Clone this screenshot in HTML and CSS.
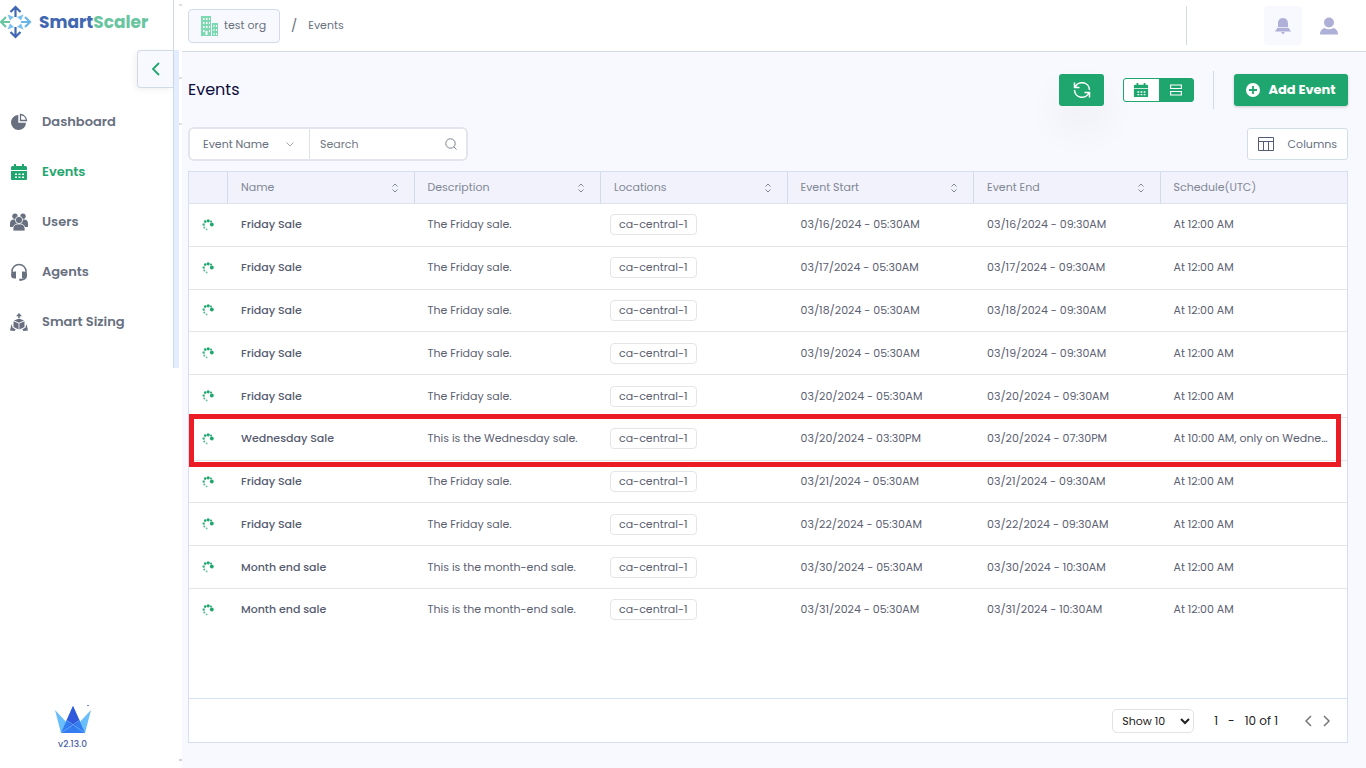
FILE: index.html
```html
<!DOCTYPE html>
<html lang="en">
<head>
    <meta charset="UTF-8">
    <meta name="viewport" content="width=device-width, initial-scale=1.0">
    <title>SmartScaler</title>
    <link rel="stylesheet" href="styles.css">
</head>
<body>

<svg class="sprite" aria-hidden="true">
    <symbol id="calendar" viewBox="0 0 18 18">
        <path fill="currentColor" d="M4 1h2v2h6V1h2v2h1.500A1.500 1.500 0 0 1 17 4.500V7H1V4.500A1.500 1.500 0 0 1 2.500 3H4zM1 8h16v8a1 1 0 0 1-1 1H2a1 1 0 0 1-1-1zM5 10.500v1.500h2v-1.500zm3.500 0v1.500h2v-1.500zm3.500 0v1.500h2v-1.500zM5 13.500v1.500h2v-1.500zm3.500 0v1.500h2v-1.500zm3.500 0v1.500h2v-1.500z" fill-rule="evenodd"/>
    </symbol>
    <symbol id="sort" viewBox="0 0 8 10">
        <path d="M1.500 3.500 4 1l2.500 2.500M1.500 6.500 4 9l2.500-2.500" fill="none" stroke="currentColor"/>
    </symbol>
    <symbol id="spinner" viewBox="0 0 12 12">
        <g fill="#1fa66e">
            <circle cx="9.800" cy="5.500" r="1.900"/>
            <circle cx="9" cy="2.600" r="1"/>
            <circle cx="6.200" cy="1.800" r="1.600"/>
            <circle cx="3.200" cy="2.600" r="1.300"/>
            <circle cx="1.700" cy="5.600" r="1.300" opacity=".8"/>
            <circle cx="2.300" cy="8.400" r="1" opacity=".8"/>
            <circle cx="4.600" cy="10.400" r=".9" opacity=".7"/>
        </g>
    </symbol>
</svg>

<div class="layout">
    <aside class="sidebar">
        <div class="sidebar-top">
            <div class="sidebar-panel">
                <a class="logo" href="#">
                    <svg width="32" height="34" viewBox="0 0 32 34">
                        <g fill="none" stroke-width="2.200">
                            <path d="M15.500 12V3M10.500 7l5-5 5 5M15.500 22v9M10.500 27l5 5 5-5" stroke="#4267b2"/>
                            <path d="M10 17H2M6 12l-5 5 5 5" stroke="#68c5a0"/>
                            <path d="M21 17h8M25 12l5 5-5 5" stroke="#6bb5e8"/>
                        </g>
                        <path d="M7.500 9.500 14 12l-4 3.500zM23.500 9.500 17 12l4 3.500zM7.500 24.500 14 22l-4-3.500zM23.500 24.500 17 22l4-3.500z" fill="#7cc0ec"/>
                    </svg>
                    <span class="logo-text">Smart<span class="logo-accent">Scaler</span></span>
                </a>
                <button class="collapse" aria-label="Collapse menu">
                    <svg width="10" height="16" viewBox="0 0 10 16"><path d="M8 2 2 8l6 6" fill="none" stroke="#1fa66e" stroke-width="1.800"/></svg>
                </button>
                <nav class="menu">
                    <a href="#">
                        <svg width="18" height="18" viewBox="0 0 18 18" fill="currentColor"><path d="M8.300 2v7.700H16A7.500 7.500 0 1 1 8.300 2z"/><path d="M10.500 1.500a6.500 6.500 0 0 1 6 6h-6z" fill="none" stroke="currentColor" stroke-width="1.300"/></svg>
                        Dashboard
                    </a>
                    <a href="#" class="active">
                        <svg width="18" height="18"><use href="#calendar"/></svg>
                        Events
                    </a>
                    <a href="#">
                        <svg width="18" height="18" viewBox="0 0 18 18" fill="currentColor"><circle cx="5" cy="3.200" r="2.700"/><circle cx="13" cy="3.200" r="2.700"/><path d="M0 14V10.500a4 4 0 0 1 4-4h10a4 4 0 0 1 4 4V14z"/><circle cx="9" cy="7" r="3.600" stroke="#fff" stroke-width=".8"/><path d="M3 18v-2.500a4.500 4.500 0 0 1 4.500-4.500h3a4.500 4.500 0 0 1 4.500 4.500V18z" stroke="#fff" stroke-width=".8"/></svg>
                        Users
                    </a>
                    <a href="#">
                        <svg width="18" height="18" viewBox="0 0 18 18" fill="currentColor"><path d="M2 10V8.500a7 7 0 0 1 14 0V13c0 3-2 3.700-5 3.700" fill="none" stroke="currentColor" stroke-width="1.500"/><path d="M6 8.500v7H4.500A3.500 3.500 0 0 1 1 12a3.500 3.500 0 0 1 3.500-3.500zM12 8.500v7h1.500A3.500 3.500 0 0 0 17 12a3.500 3.500 0 0 0-3.500-3.500z"/><circle cx="10.500" cy="16.700" r="1.300"/></svg>
                        Agents
                    </a>
                    <a href="#">
                        <svg width="18" height="18" viewBox="0 0 18 18" fill="currentColor"><path d="M9 0l3 3.200h-2.200V5H8.200V3.200H6zM9 5.500l5 2L9 9.800 4 7.500zM3.500 8.300 8.600 10.600V16.500L3.500 14zM14.500 8.300 9.400 10.600V16.500l5.100-2.500zM1.500 11l1 3.500L5.800 16.500 4.500 18 0 17.500zM16.500 11l-1 3.500-3.300 2 1.300 1.500 4.500-.5z"/></svg>
                        Smart Sizing
                    </a>
                </nav>
            </div>
            <div class="edge"></div>
        </div>
        <div class="version">
            <svg width="38" height="30" viewBox="0 0 38 30">
                <path d="M1 6 16 22 8 29H7zM37 6 22 22l8 7h1z" fill="#68bdfb"/>
                <path d="M19 2 31 29H7z" fill="#347df0"/>
                <path d="M19 2 25.500 16.500 19 23l-6.500-6.500z" fill="#3159dc"/>
                <path d="m12 16 19 13M26 16 7 29" stroke="#61a6fa" fill="none"/>
                <path d="M33 1h2v1h-2z" fill="#6c85dc"/>
            </svg>
            <span>v2.13.0</span>
        </div>
    </aside>

    <div class="page">
        <header class="topbar">
            <button class="org">
                <svg width="17" height="20" viewBox="0 0 17 20"><path d="M0 0h10v20H0zM11 7h6v13h-6z" fill="#7dd9b1"/><path d="M2 2h1.500v2H2zM5 2h1.500v2H5zM8 2h1v2H8zM2 6h1.500v2H2zM5 6h1.500v2H5zM8 6h1v2H8zM2 10h1.500v2H2zM5 10h1.500v2H5zM8 10h1v2H8zM2 14h1.500v2H2zM4.500 15h2v4h-2zM8 14h1v2H8zM12.500 9h1v2h-1zM15 9h1v2h-1zM12.500 13h1v2h-1zM15 13h1v2h-1zM12.500 17h1v2h-1zM15 17h1v2h-1z" fill="#fff"/></svg>
                test org
            </button>
            <span class="slash">/</span>
            <a class="crumb" href="#">Events</a>
            <div class="topbar-right">
                <button class="icon-btn bell" aria-label="Notifications">
                    <svg width="16" height="18" viewBox="0 0 16 18" fill="#aeb0d8"><path d="M8 1C4.500 1 3 3.800 3 6.500V10h10V6.500C13 3.800 11.500 1 8 1zM2.500 10.800h11L16 14.500H0zM6 15h4l-2 2.500z"/></svg>
                </button>
                <button class="icon-btn" aria-label="Profile">
                    <svg width="18" height="18" viewBox="0 0 18 18" fill="#aeb0d8"><circle cx="9" cy="5.500" r="5"/><path d="M0 17.500c0-4 2.500-6 4.500-6.500 3 1.600 6 1.600 9 0 2 .5 4.500 2.500 4.500 6.500z"/></svg>
                </button>
            </div>
        </header>

        <main class="content">
            <div class="toolbar">
                <h1>Events</h1>
                <button class="green-btn refresh" aria-label="Refresh">
                    <svg width="18" height="18" viewBox="0 0 18 18" fill="none" stroke="#fff" stroke-width="1.500"><path d="M1.500 1.500v5h5M2 6.500a7.500 7.500 0 0 1 14.500 2.500M16.500 16.500v-5h-5M16 11.500A7.500 7.500 0 0 1 1.500 9"/></svg>
                </button>
                <div class="view-toggle">
                    <button class="selected" aria-label="Calendar view"><svg width="16" height="16"><use href="#calendar"/></svg></button>
                    <button aria-label="List view"><svg width="12" height="12" viewBox="0 0 12 12" fill="none" stroke="#fff" stroke-width="1.200"><path d="M.6 1h10.800v3.500H.6zM.6 7.500h10.800V11H.6z"/></svg></button>
                </div>
                <button class="green-btn add">
                    <svg width="14" height="14" viewBox="0 0 14 14"><circle cx="7" cy="7" r="7" fill="#fff"/><path d="M7 3v8M3 7h8" stroke="#1fa66e" stroke-width="1.800"/></svg>
                    Add Event
                </button>
            </div>

            <div class="filters">
                <div class="search">
                    <div class="field">
                        <select aria-label="Search by"><option>Event Name</option></select>
                        <svg width="8" height="5" viewBox="0 0 8 5"><path d="m.5.500 3.500 3.500L7.500.500" fill="none" stroke="#a4a9b5"/></svg>
                    </div>
                    <input type="text" placeholder="Search" aria-label="Search">
                    <svg width="12" height="12" viewBox="0 0 12 12" fill="none" stroke="#7b808e"><circle cx="5.500" cy="5.500" r="4.700"/><path d="m9 9 2.500 2.500"/></svg>
                </div>
                <button class="columns">
                    <svg width="16" height="16" viewBox="0 0 16 16" fill="none" stroke="#555b70"><path d="M.5 1.500h15v13H.500zM.500 5.500h15M5.500 5.500v9M10.500 5.500v9"/></svg>
                    Columns
                </button>
            </div>

            <section class="grid">
                <div class="grid-body">
                    <table>
                        <thead>
                            <tr>
                                <th class="status"></th>
                                <th><div>Name <svg width="8" height="10"><use href="#sort"/></svg></div></th>
                                <th><div>Description <svg width="8" height="10"><use href="#sort"/></svg></div></th>
                                <th><div>Locations <svg width="8" height="10"><use href="#sort"/></svg></div></th>
                                <th><div>Event Start <svg width="8" height="10"><use href="#sort"/></svg></div></th>
                                <th><div>Event End <svg width="8" height="10"><use href="#sort"/></svg></div></th>
                                <th><div>Schedule(UTC)</div></th>
                            </tr>
                        </thead>
                        <tbody id="eventRows"></tbody>
                    </table>
                </div>
                <footer class="pager">
                    <select aria-label="Rows per page"><option>Show 10</option></select>
                    <span class="range"><span>1</span><span>-</span><span>10 of 1</span></span>
                    <button aria-label="Previous page"><svg width="8" height="12" viewBox="0 0 8 12"><path d="M7 1 2 6l5 5" fill="none" stroke="#777" stroke-width="1.500"/></svg></button>
                    <button aria-label="Next page"><svg width="8" height="12" viewBox="0 0 8 12"><path d="m1 1 5 5-5 5" fill="none" stroke="#777" stroke-width="1.500"/></svg></button>
                </footer>
            </section>
        </main>
    </div>
</div>

<script>
    const friday = ['Friday Sale', 'The Friday sale.'];
    const monthEnd = ['Month end sale', 'This is the month-end sale.'];
    const events = [
        [...friday, '03/16/2024 - 05:30AM', '03/16/2024 - 09:30AM', 'At 12:00 AM'],
        [...friday, '03/17/2024 - 05:30AM', '03/17/2024 - 09:30AM', 'At 12:00 AM'],
        [...friday, '03/18/2024 - 05:30AM', '03/18/2024 - 09:30AM', 'At 12:00 AM'],
        [...friday, '03/19/2024 - 05:30AM', '03/19/2024 - 09:30AM', 'At 12:00 AM'],
        [...friday, '03/20/2024 - 05:30AM', '03/20/2024 - 09:30AM', 'At 12:00 AM'],
        ['Wednesday Sale', 'This is the Wednesday sale.', '03/20/2024 - 03:30PM', '03/20/2024 - 07:30PM', 'At 10:00 AM, only on Wednesday'],
        [...friday, '03/21/2024 - 05:30AM', '03/21/2024 - 09:30AM', 'At 12:00 AM'],
        [...friday, '03/22/2024 - 05:30AM', '03/22/2024 - 09:30AM', 'At 12:00 AM'],
        [...monthEnd, '03/30/2024 - 05:30AM', '03/30/2024 - 10:30AM', 'At 12:00 AM'],
        [...monthEnd, '03/31/2024 - 05:30AM', '03/31/2024 - 10:30AM', 'At 12:00 AM']
    ];

    const body = document.getElementById('eventRows');
    events.forEach(([name, description, start, end, schedule]) => {
        const row = body.insertRow();
        if (name === 'Wednesday Sale') {
            row.className = 'highlight';
        }
        row.innerHTML = `
            <td class="status"><svg width="12" height="12"><use href="#spinner"/></svg></td>
            <td class="name">${name}</td>
            <td>${description}</td>
            <td class="location"><span class="tag">ca-central-1</span></td>
            <td>${start}</td>
            <td>${end}</td>
            <td>${schedule}</td>`;
    });
</script>

</body>
</html>
```
FILE: styles.css
```css
* {
    box-sizing: border-box;
}
body {
    margin: 0;
    font-family: Poppins, Inter, sans-serif;
    font-size: 11px;
    color: #5b6072;
    background-color: #fff;
}
button, select, input {
    font: inherit;
    color: inherit;
}
button {
    display: flex;
    align-items: center;
    justify-content: center;
    padding: 0;
    border: none;
    background: none;
    cursor: pointer;
}
a {
    color: inherit;
    text-decoration: none;
}
svg {
    display: block;
    flex: none;
}
.sprite {
    position: absolute;
    width: 0;
    height: 0;
}
.layout {
    display: flex;
    min-height: 100vh;
}

/* sidebar, with small tick marks along its right edge */
.sidebar {
    display: flex;
    flex-direction: column;
    flex: none;
    width: 182px;
    padding-right: 3px;
    background-image:
        linear-gradient(#dddfe2, #dddfe2),
        linear-gradient(#dddfe2, #dddfe2),
        linear-gradient(#dddfe2, #dddfe2),
        linear-gradient(#cfd1d4, #cfd1d4);
    background-position: right 4px, right 77px, right 123px, right bottom 7px;
    background-size: 3px 2px;
    background-repeat: no-repeat;
}
.sidebar-top {
    display: flex;
}
.sidebar-panel {
    flex: 1;
    border-right: 1px solid #d0d9e8;
    padding-bottom: 21px;
}
.edge {
    width: 5px;
    margin-top: 50px;
    background-color: #e3edff;
}
.logo {
    display: flex;
    align-items: center;
    gap: 7px;
    height: 50px;
    padding-bottom: 6px;
}
.logo-text {
    font-size: 17px;
    font-weight: 700;
    color: #4267b2;
}
.logo-accent {
    color: #68c5a0;
}
.collapse {
    width: 36px;
    height: 38px;
    margin-left: auto;
    border: 1px solid #d0dbe6;
    border-right: none;
    border-radius: 4px 0 0 4px;
    background-color: #f8f9fe;
    box-shadow: -2px 2px 6px rgba(0, 0, 0, 0.06);
}
.menu {
    padding-top: 9px;
}
.menu a {
    display: flex;
    align-items: center;
    gap: 14px;
    height: 50px;
    padding-left: 10px;
    font-size: 13px;
    font-weight: 600;
    color: #687080;
}
.menu a.active {
    color: #1fa66e;
}
.version {
    display: flex;
    flex-direction: column;
    align-items: center;
    gap: 4px;
    width: 145px;
    margin-top: auto;
    padding-bottom: 17px;
    font-size: 9px;
    font-weight: 500;
    color: #4d61a5;
}

/* top bar */
.page {
    display: flex;
    flex-direction: column;
    flex: 1;
    min-width: 0;
    background-color: #f8f9fe;
}
.topbar {
    display: flex;
    align-items: center;
    height: 52px;
    padding: 0 18px 0 6px;
    border-bottom: 1px solid #d0dbe2;
    background-color: #fff;
    color: #687080;
}
.org {
    gap: 6px;
    height: 34px;
    padding: 0 13px 0 12px;
    border: 1px solid #d0dbe6;
    border-radius: 4px;
    background-color: #f8f9fe;
}
.slash {
    margin: 0 11px;
    font-size: 13px;
}
.topbar-right {
    display: flex;
    align-items: center;
    gap: 8px;
    height: 39px;
    margin-left: auto;
    padding-left: 77px;
    border-left: 1px solid #d0dbe2;
}
.icon-btn {
    width: 38px;
    height: 39px;
    border-radius: 4px;
}
.bell {
    background-color: #f8f9fe;
}

/* page content */
.content {
    display: flex;
    flex-direction: column;
    flex: 1;
    padding: 19px 18px 25px 6px;
}
.toolbar {
    display: flex;
    align-items: center;
    height: 38px;
}
h1 {
    flex: 1;
    margin: 0;
    font-size: 16px;
    line-height: 22px;
    font-weight: 400;
    color: #0c0c3c;
}
.green-btn {
    height: 32px;
    border-radius: 3px;
    background-color: #1fa66e;
    color: #fff;
}
.refresh {
    width: 45px;
    margin-right: 19px;
    box-shadow: 0 20px 40px rgba(0, 0, 0, 0.06);
}
.view-toggle {
    display: flex;
    width: 71px;
    height: 24px;
    margin-right: 19px;
    border: 1px solid #1fa66e;
    border-radius: 3px;
    background-color: #1fa66e;
    overflow: hidden;
}
.view-toggle button {
    flex: 1;
}
.view-toggle .selected {
    background-color: #fff;
    color: #1fa66e;
}
.add {
    position: relative;
    gap: 8px;
    width: 114px;
    margin-left: 21px;
    font-size: 13px;
    font-weight: 700;
    box-shadow: 0 1px 3px rgba(0, 0, 0, 0.2);
}
.add::before {
    content: "";
    position: absolute;
    top: -3px;
    left: -21px;
    width: 1px;
    height: 38px;
    background-color: #d0dbe2;
}
.filters {
    display: flex;
    align-items: center;
    justify-content: space-between;
    height: 34px;
    margin: 18px 0 10px;
    color: #687080;
}
.search {
    display: flex;
    align-items: center;
    width: 280px;
    height: 34px;
    padding-right: 9px;
    border: 2px solid #e2e6ec;
    border-radius: 6px;
    background-color: #fff;
}
.field {
    display: grid;
    align-items: center;
    width: 120px;
    height: 30px;
    border-right: 1px solid #dde2e8;
}
.field select, .field svg {
    grid-area: 1 / 1;
}
.field select {
    appearance: none;
    height: 30px;
    padding: 0 13px;
    border: none;
    background: none;
}
.field svg {
    justify-self: end;
    margin-right: 15px;
    pointer-events: none;
}
.search input {
    flex: 1;
    min-width: 0;
    padding: 0 10px;
    border: none;
    outline: none;
    background: none;
}
.search input::placeholder {
    color: #737987;
}
.columns {
    gap: 14px;
    height: 32px;
    padding: 0 10px;
    border: 1px solid #d0dfe6;
    border-radius: 3px;
    background-color: #fff;
}

/* events table */
.grid {
    display: flex;
    flex-direction: column;
    flex: 1;
    border: 1px solid #d5dff0;
    background-color: #fff;
}
.grid-body {
    flex: 1;
}
table {
    width: 100%;
    height: 458px;
    table-layout: fixed;
    border-spacing: 0;
}
th, td {
    padding: 0 13px;
    text-align: left;
    white-space: nowrap;
    overflow: hidden;
    text-overflow: ellipsis;
}
th {
    height: 32px;
    border-right: 1px solid #d0dde8;
    border-bottom: 1px solid #e0e2ea;
    background-color: #f1f2fc;
    font-weight: 400;
    color: #828794;
}
th:last-child {
    border-right: none;
}
th div {
    display: flex;
    align-items: center;
    justify-content: space-between;
    padding-right: 2px;
}
td {
    border-bottom: 1px solid #e3e5e9;
}
tr:last-child td {
    border-bottom: none;
}
.status {
    width: 39px;
}
td.name {
    font-weight: 500;
    color: #565b6f;
}
td.location {
    padding-left: 9px;
}
.tag {
    display: inline-block;
    padding: 3px 8px;
    border: 1px solid #e3e5e9;
    border-radius: 4px;
    line-height: 13px;
}
td:last-child {
    padding-right: 16px;
}
.highlight {
    position: relative;
}
.highlight .status::after {
    content: "";
    position: absolute;
    inset: -4px 6px -6px 0;
    border: 5px solid #ec1c24;
    pointer-events: none;
}
.pager {
    display: flex;
    align-items: center;
    justify-content: flex-end;
    height: 44px;
    padding-right: 11px;
    border-top: 1px solid #d5dff5;
    color: #222;
}
.pager select {
    width: 82px;
    height: 24px;
    padding-left: 5px;
    border: 1px solid #e0e2e6;
    border-radius: 5px;
    background-color: #fff;
}
.range {
    display: flex;
    gap: 10px;
    margin: 0 20px;
    font-size: 12px;
}
.pager button {
    width: 19px;
    height: 24px;
}
```
